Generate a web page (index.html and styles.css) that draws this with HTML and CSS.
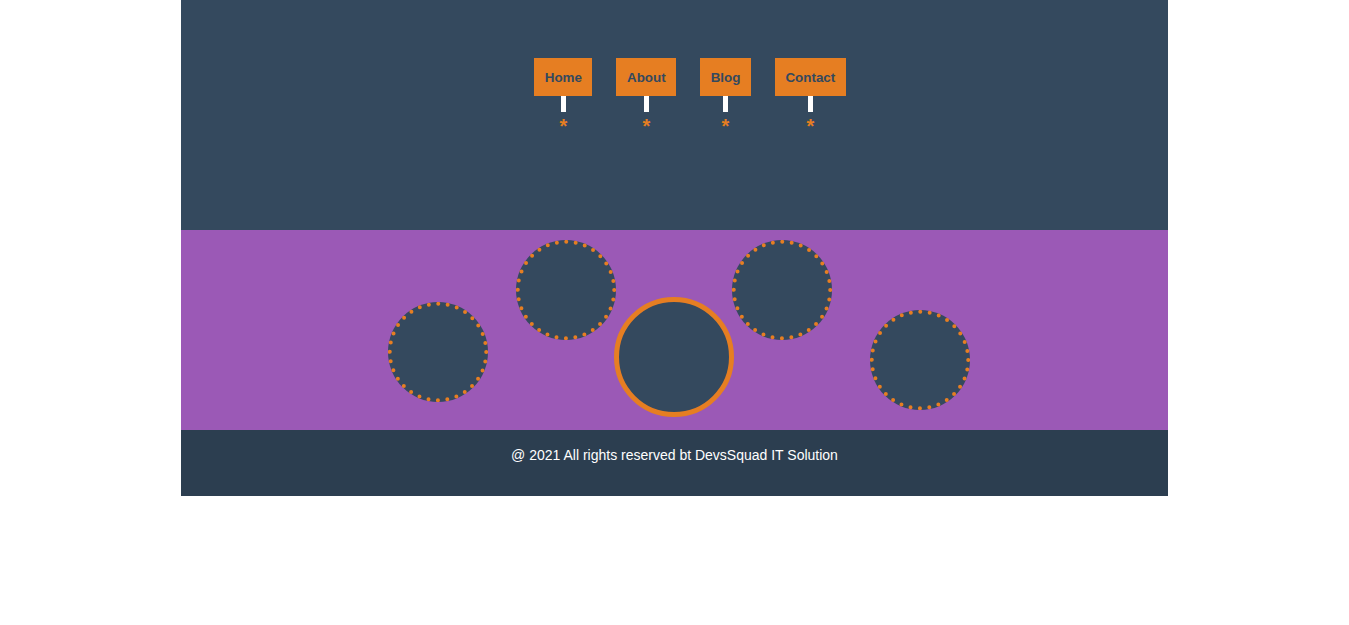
FILE: index.html
```html
<!DOCTYPE html>
<html>
<head>
<meta charset="utf-8">
<link rel="stylesheet" href="styles.css">
</head>
<body>
<div class="page">
  <header class="header">
    <nav class="nav">
      <div class="nav-item"><a class="nav-btn">Home</a><span class="stick"></span><span class="star">*</span></div>
      <div class="nav-item"><a class="nav-btn">About</a><span class="stick"></span><span class="star">*</span></div>
      <div class="nav-item"><a class="nav-btn">Blog</a><span class="stick"></span><span class="star">*</span></div>
      <div class="nav-item"><a class="nav-btn">Contact</a><span class="stick"></span><span class="star">*</span></div>
    </nav>
  </header>
  <section class="balls">
    <svg class="ball ball-1" viewBox="0 0 100 100"><circle class="ball-fill" cx="50" cy="50" r="50"/><circle class="ball-dots" cx="50" cy="50" r="48.2"/></svg>
    <svg class="ball ball-2" viewBox="0 0 100 100"><circle class="ball-fill" cx="50" cy="50" r="50"/><circle class="ball-dots" cx="50" cy="50" r="48.2"/></svg>
    <div class="ball-main"></div>
    <svg class="ball ball-4" viewBox="0 0 100 100"><circle class="ball-fill" cx="50" cy="50" r="50"/><circle class="ball-dots" cx="50" cy="50" r="48.2"/></svg>
    <svg class="ball ball-5" viewBox="0 0 100 100"><circle class="ball-fill" cx="50" cy="50" r="50"/><circle class="ball-dots" cx="50" cy="50" r="48.2"/></svg>
  </section>
  <footer class="footer">@ 2021 All rights reserved bt DevsSquad IT Solution</footer>
</div>
</body>
</html>
```
FILE: styles.css
```css
html, body {
  margin: 0;
  padding: 0;
  background: #ffffff;
  font-family: "Liberation Sans", Arial, sans-serif;
}

.page {
  width: 987px;
  margin: 0 auto;
}

.header {
  background: #34495e;
  height: 230px;
  padding-top: 58px;
  box-sizing: border-box;
}

.nav {
  display: flex;
  justify-content: center;
  gap: 24px;
  padding-left: 31px;
}

.nav-item {
  display: flex;
  flex-direction: column;
  align-items: center;
}

.nav-btn {
  display: block;
  background: #e67e22;
  color: #34495e;
  font-weight: bold;
  font-size: 13.4px;
  line-height: 15px;
  padding: 12px 10.5px 11px;
}

.stick {
  display: block;
  width: 5px;
  height: 16px;
  background: #ffffff;
}

.star {
  display: block;
  color: #e67e22;
  font-weight: bold;
  font-size: 20px;
  line-height: 20px;
  margin-top: 4px;
}

.balls {
  background: #9b59b6;
  height: 200px;
  display: flex;
  align-items: flex-start;
  padding-left: 207px;
  box-sizing: border-box;
}

.ball {
  flex: none;
  display: block;
  width: 100px;
  height: 100px;
}

.ball-fill {
  fill: #34495e;
}

.ball-dots {
  fill: none;
  stroke: #e67e22;
  stroke-width: 4;
  stroke-linecap: round;
  stroke-dasharray: 0 9.46;
}

.ball-1 { margin-top: 72px; }
.ball-2 { margin-top: 10px; margin-left: 28px; }
.ball-main {
  flex: none;
  width: 110px;
  height: 110px;
  border-radius: 50%;
  background: #34495e;
  border: 5px solid #e67e22;
  margin-top: 67px;
  margin-left: -2px;
}
.ball-4 { margin-top: 10px; margin-left: -2px; }
.ball-5 { margin-top: 80px; margin-left: 38px; }

.footer {
  background: #2c3e50;
  height: 66px;
  color: #ffffff;
  font-size: 14px;
  text-align: center;
  padding-top: 17px;
  box-sizing: border-box;
}
```
